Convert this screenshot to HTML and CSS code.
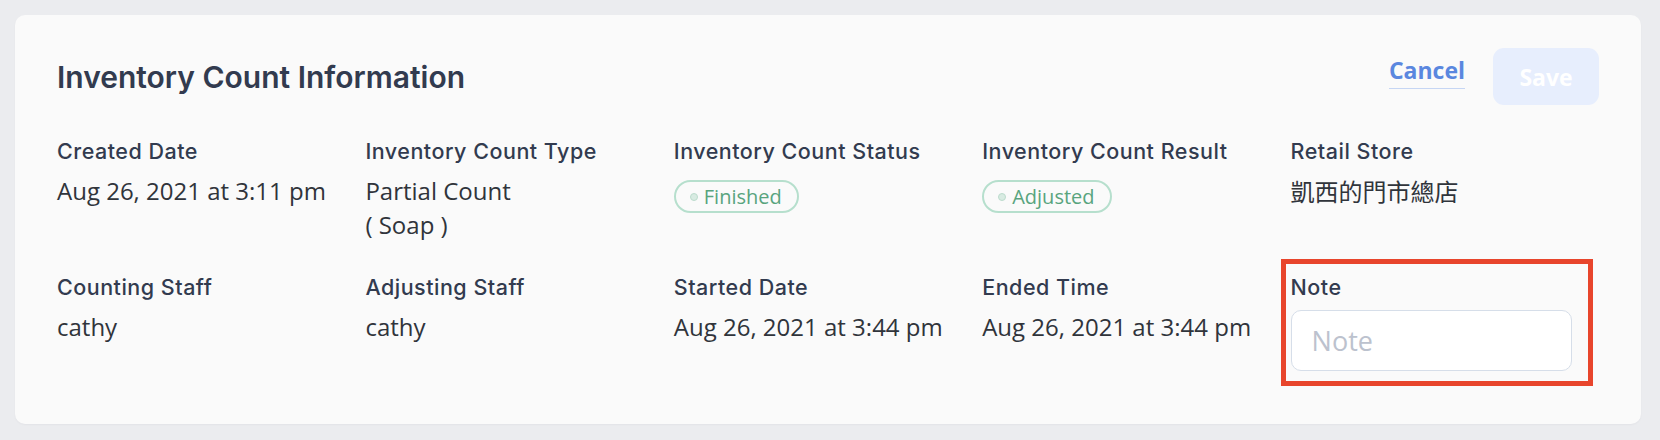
FILE: index.html
```html
<!DOCTYPE html>
<html lang="en">
<head>
<meta charset="utf-8">
<title>Inventory Count Information</title>
<link rel="stylesheet" href="styles.css">
</head>
<body>
<section class="card">
  <header class="card-header">
    <h1 class="title">Inventory Count Information</h1>
    <div class="actions">
      <a class="link-cancel" href="#">Cancel</a>
      <button class="btn-save" type="button" disabled>Save</button>
    </div>
  </header>
  <div class="info-grid">
    <div class="field">
      <div class="label">Created Date</div>
      <div class="value">Aug 26, 2021 at 3:11 pm</div>
    </div>
    <div class="field">
      <div class="label">Inventory Count Type</div>
      <div class="value">Partial Count<br>( Soap )</div>
    </div>
    <div class="field">
      <div class="label">Inventory Count Status</div>
      <div class="value"><span class="badge"><span class="dot"></span>Finished</span></div>
    </div>
    <div class="field">
      <div class="label">Inventory Count Result</div>
      <div class="value"><span class="badge"><span class="dot"></span>Adjusted</span></div>
    </div>
    <div class="field">
      <div class="label">Retail Store</div>
      <div class="value cjk">凱西的門市總店</div>
    </div>
    <div class="field">
      <div class="label">Counting Staff</div>
      <div class="value">cathy</div>
    </div>
    <div class="field">
      <div class="label">Adjusting Staff</div>
      <div class="value">cathy</div>
    </div>
    <div class="field">
      <div class="label">Started Date</div>
      <div class="value">Aug 26, 2021 at 3:44 pm</div>
    </div>
    <div class="field">
      <div class="label">Ended Time</div>
      <div class="value">Aug 26, 2021 at 3:44 pm</div>
    </div>
    <div class="field field-note">
      <div class="label">Note</div>
      <div class="value"><input class="note-input" type="text" placeholder="Note"></div>
      <div class="highlight"></div>
    </div>
  </div>
</section>
</body>
</html>
```
FILE: styles.css
```css
* { box-sizing: border-box; }

html, body {
  margin: 0;
  background: #ebecef;
}

body {
  padding: 15px 19px 16px 15px;
  font-family: "Open Sans", "Noto Sans", sans-serif;
}

.card {
  background: #fafafa;
  border-radius: 10px;
  padding: 33px 42px 53px 42px;
  box-shadow: 0 1px 2px rgba(20, 30, 50, 0.04);
}

.card-header {
  display: flex;
  align-items: center;
  justify-content: space-between;
  margin-bottom: 31px;
}

.title {
  margin: 0;
  font-family: "Inter", "Liberation Sans", sans-serif;
  font-weight: 600;
  font-size: 30px;
  color: #323b4f;
  letter-spacing: 0;
}

.actions {
  display: flex;
  align-items: center;
  gap: 28px;
}

.link-cancel {
  font-family: "Open Sans", sans-serif;
  font-weight: 700;
  font-size: 23px;
  line-height: 24px;
  color: #5a87df;
  text-decoration: none;
  padding-bottom: 6px;
  border-bottom: 1.5px solid #c6d6f4;
  margin-bottom: 7px;
}

.btn-save {
  font-family: "Open Sans", sans-serif;
  font-weight: 700;
  font-size: 23px;
  color: #ffffff;
  background: #e7eefd;
  border: none;
  border-radius: 11px;
  width: 106px;
  height: 57px;
  padding: 0;
}

.info-grid {
  display: grid;
  grid-template-columns: repeat(5, 1fr);
  row-gap: 30px;
}

.field {
  display: flex;
  flex-direction: column;
  gap: 8px;
}

.field-note {
  position: relative;
}

.label {
  font-family: "Inter", "Liberation Sans", sans-serif;
  font-weight: 500;
  font-size: 21.5px;
  letter-spacing: 0.5px;
  line-height: 30px;
  color: #323b4f;
}

.value {
  font-family: "Open Sans", "Noto Sans CJK TC", sans-serif;
  font-size: 24px;
  line-height: 34px;
  color: #30343b;
}

.value.cjk {
  font-family: "Noto Sans CJK TC", sans-serif;
}

.badge {
  display: inline-flex;
  align-items: center;
  margin-top: 6px;
  height: 33px;
  padding: 0 15px 0 14px;
  border: 2px solid #b6dfcd;
  border-radius: 17px;
  font-size: 20px;
  line-height: 27px;
  color: #58a47e;
}

.dot {
  width: 8px;
  height: 8px;
  border-radius: 50%;
  background: #d8ebe2;
  border: 1px solid #bcdccd;
  margin-right: 6px;
}

.note-input {
  display: block;
  width: 281px;
  height: 61px;
  border: 1px solid #d6dee9;
  border-radius: 10px;
  background: #ffffff;
  padding: 0 20px;
  font-family: "Open Sans", sans-serif;
  font-size: 27px;
  color: #30343b;
  outline: none;
}

.note-input::placeholder {
  color: #bcc2ce;
}

.highlight {
  position: absolute;
  left: -10px;
  top: -13px;
  width: 312px;
  height: 127px;
  border: 5px solid #e8452c;
  pointer-events: none;
}
```
